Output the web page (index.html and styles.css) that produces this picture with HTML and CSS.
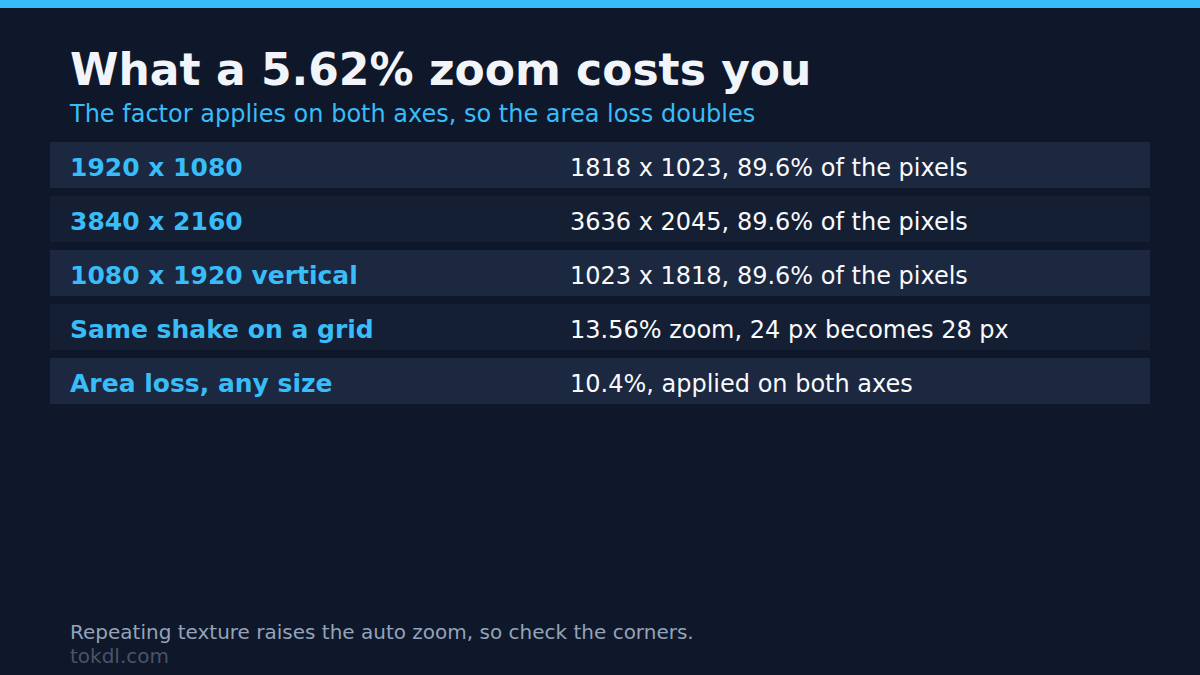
FILE: index.html
```html
<!DOCTYPE html>
<html lang="en">
<head>
<meta charset="utf-8">
<title>What a 5.62% zoom costs you</title>
<link rel="stylesheet" href="styles.css">
</head>
<body>
<div class="page">
  <div class="topbar"></div>
  <main class="content">
    <header class="head">
      <h1 class="title">What a 5.62% zoom costs you</h1>
      <p class="subtitle">The factor applies on both axes, so the area loss doubles</p>
    </header>
    <div class="rows">
      <div class="row odd"><span class="label">1920 x 1080</span><span class="value">1818 x 1023, 89.6% of the pixels</span></div>
      <div class="row even"><span class="label">3840 x 2160</span><span class="value">3636 x 2045, 89.6% of the pixels</span></div>
      <div class="row odd"><span class="label">1080 x 1920 vertical</span><span class="value">1023 x 1818, 89.6% of the pixels</span></div>
      <div class="row even"><span class="label">Same shake on a grid</span><span class="value">13.56% zoom, 24 px becomes 28 px</span></div>
      <div class="row odd"><span class="label">Area loss, any size</span><span class="value">10.4%, applied on both axes</span></div>
    </div>
    <footer class="foot">
      <p class="note">Repeating texture raises the auto zoom, so check the corners.</p>
      <p class="site">tokdl.com</p>
    </footer>
  </main>
</div>
</body>
</html>
```
FILE: styles.css
```css
* { box-sizing: border-box; }
html, body { margin: 0; padding: 0; }
body {
  background: #0f172a;
  font-family: "DejaVu Sans", "Noto Sans", sans-serif;
  color: #f1f5f9;
}
.page {
  width: 1200px;
  height: 675px;
  display: flex;
  flex-direction: column;
  overflow: hidden;
}
.topbar {
  height: 8px;
  background: #38bdf8;
  flex: none;
}
.content {
  flex: 1;
  display: flex;
  flex-direction: column;
  padding: 35px 50px 7px 50px;
}
.head { padding-left: 20px; }
.title {
  margin: 0;
  font-size: 44px;
  line-height: 53px;
  font-weight: bold;
  color: #f1f5f9;
}
.subtitle {
  margin: 4px 0 0 0;
  font-size: 24px;
  line-height: 28px;
  color: #38bdf8;
}
.rows {
  margin-top: 14px;
  display: flex;
  flex-direction: column;
  gap: 8px;
}
.row {
  display: grid;
  grid-template-columns: 500px 1fr;
  align-items: baseline;
  height: 46px;
  padding: 12px 20px 6px 20px;
  line-height: 28px;
}
.row.odd { background: #1c2740; }
.row.even { background: #151f33; }
.label { font-size: 25px; font-weight: bold; color: #38bdf8; }
.value { font-size: 24px; color: #f8fafc; }
.foot {
  margin-top: auto;
  padding-left: 20px;
}
.note, .site {
  margin: 0;
  font-size: 20px;
  line-height: 24px;
}
.note { color: #94a3b8; }
.site { color: #475569; }
```
